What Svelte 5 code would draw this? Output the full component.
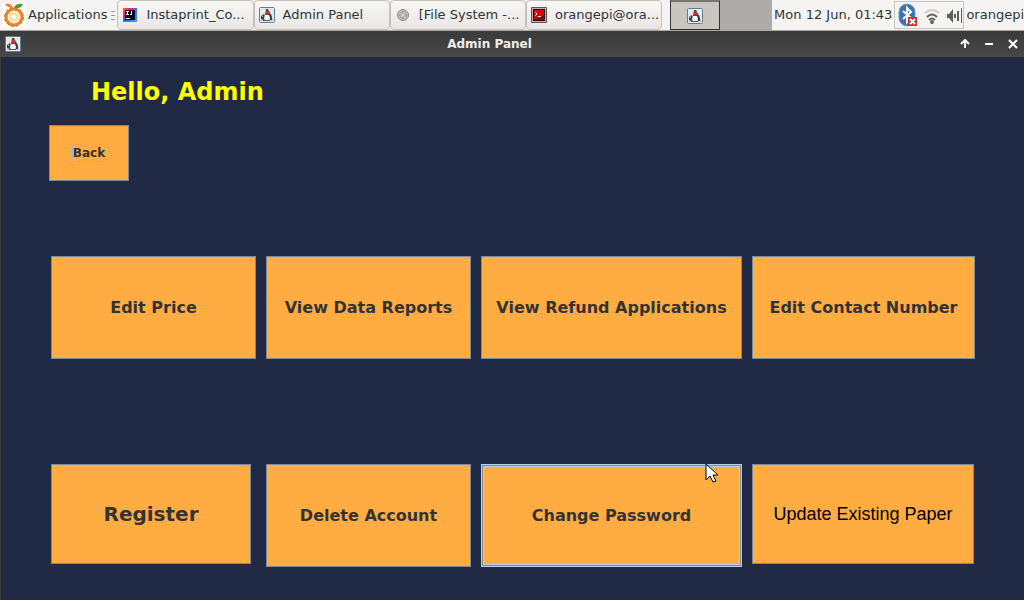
<script>
  const tasks = [
    { icon: 'idea', label: 'Instaprint_Co...' },
    { icon: 'java', label: 'Admin Panel' },
    { icon: 'disk', label: '[File System -...' },
    { icon: 'term', label: 'orangepi@ora...' }
  ];
  const actions = [
    { label: 'Edit Price' },
    { label: 'View Data Reports' },
    { label: 'View Refund Applications' },
    { label: 'Edit Contact Number' },
    { label: 'Register', kind: 'register' },
    { label: 'Delete Account' },
    { label: 'Change Password', kind: 'hover' },
    { label: 'Update Existing Paper', kind: 'update' }
  ];
</script>

{#snippet java()}
  <svg class="icon" viewBox="0 0 16 16" width="16" height="16" aria-hidden="true">
    <rect x="0.5" y="0.5" width="15" height="15" rx="1" fill="#e4e9ea" stroke="#5d7f96" />
    <path d="M2 11h12v3H2z" fill="#c0c5c7" />
    <path d="M7 2h2l2 4v2H6z" fill="#4a4c4c" />
    <path d="M2 9l3-2 1 2v3l-1 1-3-1z" fill="#3c4042" />
    <path d="M10 6l2 1 1 3v3h-2l-1-3z" fill="#3c4042" />
    <path d="M3 9l1-1v2H3z" fill="#aeb4b6" />
    <path d="M6 8h4l1 3-1 2H6l-1-2z" fill="#f8f8f8" />
    <path d="M4 13.500h7" stroke="#55595b" />
    <circle cx="8.500" cy="5.500" r="1.800" fill="#e02c2c" />
  </svg>
{/snippet}

<div class="screen">
  <nav class="taskbar" aria-label="Desktop panel">
    <button class="apps">
      <svg width="24" height="24" viewBox="0 0 24 24" aria-hidden="true">
        <rect width="24" height="24" fill="#fff" />
        <circle cx="12" cy="14" r="8" fill="#fff8e9" stroke="#ed831c" stroke-width="3" />
        <circle cx="12" cy="14" r="9.500" fill="none" stroke="#c9702a" stroke-dasharray="3 2" />
        <circle cx="12" cy="14" r="5" fill="#fbd59b" />
        <path d="M12 9v10M7 14h10M8 10l8 8M16 10l-8 8" stroke="#fff3dc" />
        <circle cx="12" cy="14" r="2" fill="#fff" />
        <path d="M11 5C7 5 4 3 3 1c4-1 7 0 8 4z" fill="#e9821f" />
        <path d="M12 5c1-4 4-5 9-4-1 4-5 5-9 4z" fill="#539b43" />
      </svg>
      <span>Applications</span>
    </button>
    <span class="grip"></span>
    <div class="tasks">
      {#each tasks as task}
        <button class="task">
          {#if task.icon === 'idea'}
            <svg class="icon" width="16" height="16" viewBox="0 0 16 16" aria-hidden="true">
              <defs><linearGradient id="idea" x1="0" y1="0" x2="1" y2="1"><stop stop-color="#ff6b20" /><stop offset=".3" stop-color="#ee207c" /><stop offset=".5" stop-color="#2376ff" /><stop offset="1" stop-color="#2da5ff" /></linearGradient></defs>
              <path d="M1 1h14v14H1z" fill="url(#idea)" />
              <path d="M3 3h10v10H3z" fill="#08020c" />
              <path d="M4 4.500h3M5.500 4.500v3M4 7.500h3M9.500 4v3.500H8M4 11.500h4" stroke="#fff" fill="none" />
            </svg>
          {:else if task.icon === 'java'}
            {@render java()}
          {:else if task.icon === 'disk'}
            <svg class="icon" width="16" height="16" viewBox="0 0 16 16" aria-hidden="true">
              <circle cx="8" cy="8" r="5.500" fill="#c6c6c4" stroke="#8f8f8d" />
              <circle cx="8" cy="8" r="3.500" fill="none" stroke="#a2a2a0" />
              <path d="M3 8h10M8 3v10" stroke="#a2a2a0" fill="none" />
              <circle cx="8" cy="8" r="1" fill="#ededeb" />
            </svg>
          {:else}
            <svg class="icon" width="16" height="16" viewBox="0 0 16 16" aria-hidden="true">
              <rect width="16" height="16" rx="1" fill="#555753" />
              <rect x="1" y="1" width="14" height="14" fill="#b9b9b5" />
              <rect x="2" y="2" width="12" height="12" fill="#330000" />
              <path d="M3 3h10v6L3 13z" fill="#d5080c" /><path d="M3 13l10-4v4z" fill="#8e0003" />
              <path d="M4 5l2 2-2 2M7 9.500h3" stroke="#fff" fill="none" />
            </svg>
          {/if}
          <span>{task.label}</span>
        </button>
      {/each}
    </div>
    <div class="pager">
      <button class="space" aria-label="Workspace 1">{@render java()}</button>
      <span class="other"></span>
    </div>
    <time>Mon 12 Jun, 01:43</time>
    <div class="tray">
      <svg width="20" height="24" viewBox="0 0 20 24" aria-hidden="true">
        <rect x="1" y="1" width="16" height="22" rx="8" fill="#3c72b0" stroke="#6f9bcb" />
        <path d="M5 8l8 7-4 4V5l4 4-8 7" stroke="#fff" stroke-width="2" fill="none" />
        <path d="M10 14h9v9h-9z" fill="#e2222d" /><path d="M12 16l5 5M17 16l-5 5" stroke="#fff" stroke-width="2" />
      </svg>
      <svg width="18" height="20" viewBox="0 0 18 20" aria-hidden="true">
        <path d="M2 8q7-6 14 0" stroke="#cbcbca" stroke-width="2" fill="none" />
        <path d="M4 12q5-5 10 0M6 15q3-3 6 0" stroke="#606462" stroke-width="2" fill="none" />
        <circle cx="9" cy="17" r="2" fill="#606462" />
      </svg>
      <svg width="17" height="20" viewBox="0 0 17 20" aria-hidden="true">
        <path d="M1 9h2l4-5v14l-4-5H1z" fill="#5b5f5e" />
        <path d="M9 9v4M12 6v10" stroke="#5b5f5e" stroke-width="2" /><path d="M15.500 3v15" stroke="#5b5f5e" stroke-width="1" />
      </svg>
    </div>
    <span class="user">orangepi</span>
  </nav>

  <header class="titlebar">
    {@render java()}
    <h1>Admin Panel</h1>
    <div class="controls">
      <button aria-label="Roll up"><svg width="10" height="10" viewBox="0 0 10 10"><path d="M5 1v8M1 5l4-4 4 4" /></svg></button>
      <button aria-label="Minimize"><svg width="10" height="10" viewBox="0 0 10 10"><path d="M1 5h8" /></svg></button>
      <button aria-label="Close"><svg width="10" height="10" viewBox="0 0 10 10"><path d="M1 1l8 8M9 1l-8 8" /></svg></button>
    </div>
  </header>

  <main>
    <h2>Hello, Admin</h2>
    <button class="back"><span>Back</span></button>
    <div class="grid">
      {#each actions as action}
        <button class="action {action.kind ?? ''}">
          {action.label}
          {#if action.kind === 'hover'}
            <svg class="pointer" width="14" height="22" viewBox="0 0 14 22" aria-hidden="true">
              <path d="M1 1v16l4-4 3 6 3-1-3-6h5z" fill="#fff" stroke="#000" />
            </svg>
          {/if}
        </button>
      {/each}
    </div>
  </main>
</div>

<style>
  :global(body) { margin: 0; background: #fff; }
  .screen { margin: 0 3px 1px 0; font-family: "DejaVu Sans", sans-serif; color: #2e3436; }
  button { font: inherit; color: inherit; border: 0; margin: 0; padding: 0; background: none; }
  svg { display: block; flex: none; }
  .taskbar { display: flex; align-items: center; height: 30px; background: #f5f4f2; border-bottom: 1px solid #aaa59d; font-size: 13px; white-space: nowrap; overflow: hidden; }
  .taskbar span, .taskbar time { padding-bottom: 2px; }
  .apps { display: flex; align-items: center; gap: 2px; padding-left: 2px; }
  .taskbar .grip { width: 4px; height: 9px; margin: 0 2px 0 4px; padding: 0; background: repeating-linear-gradient(#999 0 1px, transparent 1px 4px); }
  .tasks { flex: 1; display: grid; grid-template-columns: repeat(4, 1fr); height: 30px; }
  .task { display: flex; align-items: center; gap: 8px; padding-left: 4px; min-width: 0; border: 1px solid #c5c0b9; border-radius: 4px; background: linear-gradient(#f8f7f6, #e9e7e5); }
  .pager { display: flex; margin: 0 2px 0 8px; height: 30px; }
  .space { display: flex; align-items: center; justify-content: center; width: 50px; border: 1px solid #2e3436; border-top: 2px solid #777570; background: #c9c5bf; }
  .other { width: 52px; background: #adacaa; }
  .tray { display: flex; align-items: center; gap: 5px; height: 26px; margin: 0 2px; padding: 0 0 0 3px; border: 1px solid #c9c6bf; }
  .titlebar { display: grid; grid-template-columns: 16px 1fr 66px; align-items: center; height: 26px; padding-left: 5px; background: linear-gradient(#3b3b3b, #474747); color: #eee; }
  .titlebar h1 { margin: 0; font-size: 12px; text-align: center; }
  .controls { display: flex; justify-content: flex-end; gap: 14px; padding-right: 6px; }
  .controls path { fill: none; stroke: #fff; stroke-width: 2; }
  main { background: #202a44; border-left: 1px solid #3c3c3c; padding: 21px 49px 33px 48px; }
  h2 { margin: 0 0 19px 42px; font-size: 24px; line-height: 28px; color: #ff0; }
  .back { display: flex; align-items: center; justify-content: center; width: 80px; height: 56px; border: 1px solid #7a8a99; background: #ffad42; color: #333; font-size: 12px; font-weight: bold; }
  .back span { display: block; border: 1px solid #a3b8cc; line-height: 15px; }
  .grid { display: grid; grid-template-columns: 205fr 205fr 261fr 223fr; gap: 105px 10px; align-items: start; margin: 75px 0 0 2px; }
  .action { position: relative; height: 103px; border: 1px solid #7a8a99; background: #ffad42; color: #333; font-size: 16px; font-weight: bold; white-space: nowrap; }
  .register { height: 100px; margin-right: 5px; font-size: 20px; }
  .hover { box-shadow: inset 0 0 0 1px #7a8a99, inset 0 0 0 2px #b8cfe5; border-color: #b8cfe5; }
  .update { height: 100px; margin-right: 1px; font-family: "Liberation Sans", Arial, sans-serif; font-size: 18px; font-weight: normal; color: #000; }
  .pointer { position: absolute; top: -2px; right: 22px; }
</style>
